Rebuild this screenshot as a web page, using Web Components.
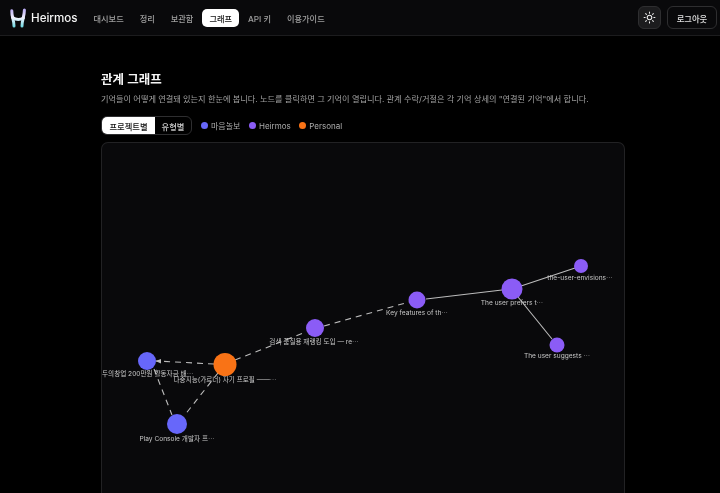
<!doctype html>
<html lang="ko"><head><meta charset="utf-8"><title>Heirmos</title>
<style>
html,body{margin:0;height:100%;background:#000;overflow:hidden}
body{font-family:Inter,"Noto Sans CJK KR",sans-serif;color:#f2f2f2}
</style></head><body>
<hm-app></hm-app>
<template id="t-header"><style>
:host{display:flex;align-items:center;height:35px;padding:0 3px 0 9px;background:#09090b;border-bottom:1px solid #1c1c1e;box-sizing:content-box}
.logo{display:flex;align-items:center;gap:4px;font-size:11.6px;font-weight:500;color:#f5f5f5;margin-right:8.5px}
svg.mark{width:18px;height:20px;display:block}
nav{display:flex;align-items:center;gap:1px}
.end{margin-left:auto;display:flex;align-items:center;gap:6px}
.sun{width:23px;height:23px;border-radius:6px;background:#1c1c1e;border:1px solid #2e2e30;box-sizing:border-box;display:flex;align-items:center;justify-content:center}
.out{height:23px;width:50px;border-radius:6px;border:1px solid #2e2e30;box-sizing:border-box;font-size:8.3px;display:flex;align-items:center;justify-content:center;color:#e0e0e0;font-weight:500}
</style>
<div class="logo"><svg class="mark" viewBox="0 0 18 20"><defs><linearGradient id="lg" gradientUnits="userSpaceOnUse" x1="0" y1="0" x2="0" y2="20"><stop offset="0" stop-color="#b3a2f2"/><stop offset=".5" stop-color="#f2f2ff"/><stop offset="1" stop-color="#5fd6df"/></linearGradient></defs><g fill="none" stroke="url(#lg)" stroke-linecap="round"><path d="M2.8 2.8C2.6 9 5 12 5 18" stroke-width="3"/><path d="M15.4 2C15.4 8 13 12 13 18" stroke-width="3"/><path d="M3.5 9.5C7 12 11 12 14.5 10" stroke-width="2.8"/></g></svg><span>Heirmos</span></div>
<nav><slot></slot></nav>
<div class="end"><div class="sun"><svg width="13" height="13" viewBox="0 0 24 24" fill="none" stroke="#ececec" stroke-width="1.9" stroke-linecap="round"><circle cx="12" cy="12" r="4.2"/><path d="M12 2v2M12 20v2M4.9 4.9l1.4 1.4M17.7 17.7l1.4 1.4M2 12h2M20 12h2M4.9 19.1l1.4-1.4M17.7 6.3l1.4-1.4"/></svg></div><div class="out">로그아웃</div></div>
</template>
<template id="t-link"><style>
:host{display:flex;align-items:center;height:18px;padding:0 7.5px;border-radius:5px;font-size:8.2px;color:#a0a0a0;font-weight:500;white-space:nowrap}
:host([active]){background:#fff;color:#111}
</style><slot></slot></template>
<template id="t-toolbar"><style>
:host{display:flex;align-items:center;gap:9px;height:19px;font-size:8px;color:#acacac}
.seg{display:flex;height:19px;width:91px;border:1px solid #2e2e30;border-radius:6px;overflow:hidden;box-sizing:border-box;font-weight:500;font-size:8.3px}
.seg span{display:flex;align-items:center;justify-content:center}
.on{background:#fff;color:#111;width:53px}
.off{color:#c8c8c8;flex:1}
.leg{display:flex;align-items:center;gap:8.5px}
</style><div class="seg"><span class="on">프로젝트별</span><span class="off">유형별</span></div><div class="leg"><slot></slot></div></template>
<template id="t-legend"><style>
:host{display:flex;align-items:center;gap:3px;white-space:nowrap}
i{width:7px;height:7px;border-radius:50%;background:var(--c)}
</style><i></i><slot></slot></template>
<template id="t-graph"><style>
:host{display:block;height:351px;background:#09090b;border:1px solid #222224;border-bottom:0;border-radius:7px 7px 0 0;overflow:hidden;box-sizing:border-box}
svg{display:block}
text{font-size:6.6px;fill:#c8c8c8;text-anchor:middle;font-family:Inter,"Noto Sans CJK KR",sans-serif}
.e{stroke:#bcbcbc;stroke-width:1.1;fill:none}
.d{stroke-dasharray:6 5}
</style>
<svg width="524" height="351" viewBox="102 143 524 351">
<defs><marker id="a" viewBox="0 0 6 6" refX="5.5" refY="3" markerWidth="5" markerHeight="5" orient="auto"><path d="M0 .5L6 3L0 5.5Z" fill="#bcbcbc"/></marker></defs>
<line class="e d" x1="214" y1="364" x2="156" y2="361" marker-end="url(#a)"/>
<line class="e d" x1="154" y1="369" x2="172" y2="415"/>
<line class="e d" x1="218" y1="373" x2="184" y2="416"/>
<line class="e d" x1="235" y1="360" x2="306" y2="332"/>
<line class="e d" x1="324" y1="326" x2="409" y2="302"/>
<line class="e" x1="426" y1="299" x2="502" y2="290"/>
<line class="e" x1="521" y1="286" x2="575" y2="268"/>
<line class="e" x1="518" y1="297" x2="552" y2="339"/>
<g fill="#6767fa"><circle cx="147" cy="361" r="9"/><circle cx="177" cy="424" r="10"/></g>
<circle cx="225" cy="364.5" r="11.5" fill="#f97316"/>
<g fill="#8b5cf6"><circle cx="315" cy="328" r="9"/><circle cx="417" cy="300" r="8.5"/><circle cx="512" cy="289" r="10.5"/><circle cx="581" cy="266" r="7"/><circle cx="557" cy="345" r="7.5"/></g>
<text x="102" y="376" style="text-anchor:start">두의창업 200만원 활동자금 배⋯</text>
<text x="225" y="382">다중지능(가르너) 자기 프로필 ——⋯</text>
<text x="177" y="440.5">Play Console 개발자 프⋯</text>
<text x="314" y="343.5">검색 품질용 재랭킹 도입 — re⋯</text>
<text x="417" y="315">Key features of th⋯</text>
<text x="512" y="305">The user prefers t⋯</text>
<text x="580" y="280">the-user-envisions⋯</text>
<text x="557" y="358">The user suggests ⋯</text>
</svg></template>
<template id="t-app"><style>
:host{display:block;height:493px;overflow:hidden;will-change:transform}
main{width:524px;margin:0 auto;padding-top:37px;position:relative;left:3px}
h1{margin:0;font-size:12.5px;line-height:14px;font-weight:600;color:#f5f5f5}
p{margin:6px 0 0;font-size:8.18px;line-height:12px;color:#a0a0a0;white-space:nowrap}
hm-toolbar{margin-top:11px}
hm-graph{margin-top:6.5px}
</style>
<hm-header><hm-link>대시보드</hm-link><hm-link>정리</hm-link><hm-link>보관함</hm-link><hm-link active>그래프</hm-link><hm-link>API 키</hm-link><hm-link>이용가이드</hm-link></hm-header>
<main><h1>관계 그래프</h1><p>기억들이 어떻게 연결돼 있는지 한눈에 봅니다. 노드를 클릭하면 그 기억이 열립니다. 관계 수락/거절은 각 기억 상세의 "연결된 기억"에서 합니다.</p>
<hm-toolbar><hm-legend style="--c:#6767fa">마음놀보</hm-legend><hm-legend style="--c:#8b5cf6">Heirmos</hm-legend><hm-legend style="--c:#f97316">Personal</hm-legend></hm-toolbar>
<hm-graph></hm-graph></main></template>
<script>
for(const [n,t] of [['hm-link','t-link'],['hm-legend','t-legend'],['hm-toolbar','t-toolbar'],['hm-graph','t-graph'],['hm-header','t-header'],['hm-app','t-app']]){
customElements.define(n,class extends HTMLElement{constructor(){super();this.attachShadow({mode:'open'}).append(document.getElementById(t).content.cloneNode(true));}});
}
</script>
</body></html>
